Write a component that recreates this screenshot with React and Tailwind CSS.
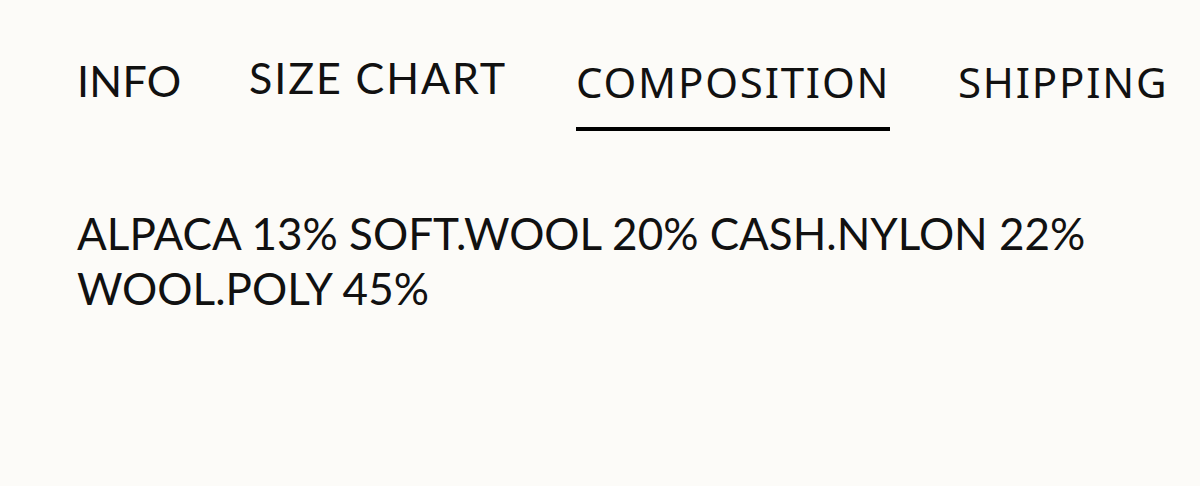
import React, { useState } from 'react';

const TABS = ['INFO', 'SIZE CHART', 'COMPOSITION', 'SHIPPING'];

// per-tab column widths and small vertical nudges, as in the picture
const TAB_STYLE = {
  'INFO': 'w-[172px] pt-[3px] font-["Lato",sans-serif] text-[43px] tracking-[0.3px]',
  'SIZE CHART': 'w-[327px] font-["Lato",sans-serif] text-[43px] tracking-[1.9px]',
  'COMPOSITION': 'w-[382px] pt-[4px] font-["Noto_Sans",sans-serif] text-[42px] tracking-[1.8px]',
  'SHIPPING': 'pt-[4px] font-["Noto_Sans",sans-serif] text-[42px] tracking-[1.8px]',
};

export default function App() {
  const [active, setActive] = useState('COMPOSITION');

  return (
    <div className="w-[1200px] h-[486px] bg-[#fcfbf8] text-[#111] overflow-hidden">
      <nav className="flex items-start pl-[77px] pt-[52px]">
        {TABS.map((t) => (
          <div key={t} className={TAB_STYLE[t]}>
            <button
              onClick={() => setActive(t)}
              className="flex flex-col items-stretch leading-[52px] whitespace-nowrap"
            >
              <span>{t}</span>
              <span
                className={
                  active === t
                    ? 'mt-[19px] h-[4px] bg-black'
                    : 'mt-[19px] h-[4px] bg-transparent'
                }
              />
            </button>
          </div>
        ))}
      </nav>

      <p className="mt-[75px] pl-[77px] pr-[80px] font-['Lato',sans-serif] text-[44px] leading-[55px] text-[#111]">
        ALPACA 13% SOFT.WOOL 20% CASH.NYLON 22% WOOL.POLY 45%
      </p>
    </div>
  );
}
